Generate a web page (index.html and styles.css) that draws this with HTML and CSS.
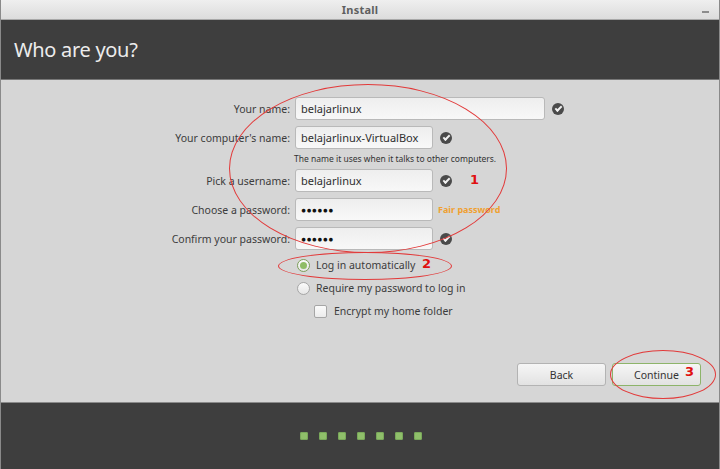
FILE: index.html
```html
<!DOCTYPE html>
<html lang="en">
<head>
    <meta charset="UTF-8">
    <title>Install</title>
    <link rel="stylesheet" href="styles.css">
</head>
<body>
    <div class="window">
        <div class="titlebar">
            <span class="title">Install</span>
            <span class="minimize"></span>
        </div>
        <div class="header">
            <h1>Who are you?</h1>
        </div>

        <div class="content">
            <div class="form">
                <label>Your name:</label>
                <div class="field">
                    <div class="input wide">belajarlinux</div>
                    <span class="check"></span>
                </div>

                <label>Your computer's name:</label>
                <div class="field">
                    <div class="input">belajarlinux-VirtualBox</div>
                    <span class="check"></span>
                </div>

                <span></span>
                <div class="hint">The name it uses when it talks to other computers.</div>

                <label>Pick a username:</label>
                <div class="field">
                    <div class="input">belajarlinux</div>
                    <span class="check"></span>
                </div>

                <label>Choose a password:</label>
                <div class="field">
                    <div class="input dots">&#9679;&#9679;&#9679;&#9679;&#9679;&#9679;</div>
                    <span class="strength">Fair password</span>
                </div>

                <label>Confirm your password:</label>
                <div class="field">
                    <div class="input dots">&#9679;&#9679;&#9679;&#9679;&#9679;&#9679;</div>
                    <span class="check"></span>
                </div>
            </div>

            <div class="options">
                <div class="option"><span class="radio checked"></span>Log in automatically</div>
                <div class="option"><span class="radio"></span>Require my password to log in</div>
                <div class="option sub"><span class="checkbox"></span>Encrypt my home folder</div>
            </div>

            <div class="buttons">
                <button>Back</button>
                <button class="primary">Continue</button>
            </div>
        </div>

        <div class="footer">
            <div class="steps">
                <span></span><span></span><span></span><span></span><span></span><span></span><span></span>
            </div>
        </div>

        <!-- red annotations drawn on top of the screenshot -->
        <div class="mark ring1"></div>
        <div class="mark ring2"></div>
        <div class="mark ring3"></div>
        <span class="num num1">1</span>
        <span class="num num2">2</span>
        <span class="num num3">3</span>
    </div>
</body>
</html>
```

FILE: styles.css
```css
body {
    margin: 0;
    font-family: 'Noto Sans', sans-serif;
    background-color: #d6d6d6;
}

.window {
    position: relative;
    width: 720px;
    height: 469px;
    box-sizing: border-box;
    display: flex;
    flex-direction: column;
    border-left: 1px solid #8a8a8a;
    border-right: 1px solid #8a8a8a;
    overflow: hidden;
}

.titlebar {
    height: 20px;
    flex-shrink: 0;
    display: flex;
    align-items: center;
    justify-content: center;
    position: relative;
    background: linear-gradient(#efefef, #dcdcdc);
    border-bottom: 1px solid #a8a8a8;
    box-sizing: border-box;
}

.title {
    font-size: 11px;
    font-weight: bold;
    color: #5f5f5f;
    letter-spacing: 0.2px;
}

.minimize {
    position: absolute;
    right: 10px;
    top: 11px;
    width: 7px;
    height: 2px;
    background-color: #8c8c8c;
}

.header {
    height: 59px;
    flex-shrink: 0;
    background-color: #3e3e3e;
    display: flex;
    align-items: center;
    padding-left: 13px;
    border-bottom: 1px solid #777;
}

.header h1 {
    margin: 0;
    font-size: 20px;
    font-weight: normal;
    color: #ececec;
    letter-spacing: -0.3px;
}

.content {
    flex: 1;
    display: flex;
    flex-direction: column;
    background-color: #d6d6d6;
    padding-top: 17px;
}

.form {
    display: grid;
    grid-template-columns: 289px 1fr;
    column-gap: 5px;
    row-gap: 6px;
    align-items: center;
}

.form label {
    text-align: right;
    font-size: 10.5px;
    color: #3c3c3c;
}

.field {
    display: flex;
    align-items: center;
    gap: 6px;
}

.input {
    width: 138px;
    height: 23px;
    box-sizing: border-box;
    padding: 0 5px;
    display: flex;
    align-items: center;
    font-size: 11px;
    color: #2e2e2e;
    background: linear-gradient(#eeeeee, #f8f8f8);
    border: 1px solid #b9b9b9;
    border-radius: 3px;
}

.input.wide {
    width: 250px;
}

.input.dots {
    font-size: 8.5px;
    letter-spacing: 0.3px;
    color: #111;
}

.check {
    width: 12px;
    height: 12px;
    border-radius: 50%;
    background-color: #4a4a4a;
    position: relative;
    margin-left: 1px;
}

.check::after {
    content: "";
    position: absolute;
    left: 3px;
    top: 3px;
    width: 5px;
    height: 2px;
    border-left: 2px solid #f2f2f2;
    border-bottom: 2px solid #f2f2f2;
    transform: rotate(-45deg);
}

.hint {
    font-size: 8.5px;
    line-height: 10px;
    color: #333;
    margin: -1px 0 -1px -1px;
}

.strength {
    font-size: 9px;
    font-weight: bold;
    color: #f0a030;
    margin-left: -1px;
}

.options {
    display: flex;
    flex-direction: column;
    gap: 9px;
    padding-left: 296px;
    margin-top: 8px;
}

.option {
    display: flex;
    align-items: center;
    gap: 6px;
    font-size: 10.5px;
    color: #3c3c3c;
    height: 14px;
}

.option.sub {
    padding-left: 17px;
    gap: 7px;
}

.radio {
    width: 11px;
    height: 11px;
    border-radius: 50%;
    border: 1px solid #a6a6a6;
    background: linear-gradient(#fbfbfb, #e6e6e6);
    position: relative;
}

.radio.checked {
    border-color: #7c9f5a;
}

.radio.checked::after {
    content: "";
    position: absolute;
    left: 2px;
    top: 2px;
    width: 7px;
    height: 7px;
    border-radius: 50%;
    background-color: #8fbd66;
}

.checkbox {
    width: 11px;
    height: 11px;
    border: 1px solid #a6a6a6;
    border-radius: 2px;
    background: linear-gradient(#fbfbfb, #ececec);
}

.buttons {
    display: flex;
    justify-content: flex-end;
    gap: 6px;
    margin-top: auto;
    margin-bottom: 16px;
    padding-right: 18px;
}

.buttons button {
    width: 89px;
    height: 23px;
    font-family: 'Noto Sans', sans-serif;
    font-size: 10.5px;
    color: #333;
    background: linear-gradient(#f6f6f6, #e2e2e2);
    border: 1px solid #b3b3b3;
    border-radius: 3px;
}

.buttons button.primary {
    border-color: #8db46a;
}

.footer {
    height: 66px;
    flex-shrink: 0;
    background-color: #3e3e3e;
    border-top: 1px solid #8a8a8a;
    display: flex;
    justify-content: center;
}

.steps {
    display: flex;
    gap: 11px;
    margin-top: 29px;
    margin-left: 2px;
}

.steps span {
    width: 8px;
    height: 8px;
    border-radius: 2px;
    background-color: #8fbf6a;
    box-shadow: inset 0 0 0 1px #79a85a;
}

/* annotations */
.mark {
    position: absolute;
    border: 1px solid #e23a3a;
    border-radius: 50%;
    pointer-events: none;
}

.ring1 {
    left: 228px;
    top: 84px;
    width: 276px;
    height: 167px;
}

.ring2 {
    left: 277px;
    top: 252px;
    width: 172px;
    height: 26px;
}

.ring3 {
    left: 609px;
    top: 350px;
    width: 104px;
    height: 47px;
}

.num {
    position: absolute;
    font-family: 'DejaVu Sans', sans-serif;
    font-weight: bold;
    font-size: 13px;
    color: #e01010;
}

.num1 {
    left: 469px;
    top: 172px;
}

.num2 {
    left: 421px;
    top: 256px;
}

.num3 {
    left: 684px;
    top: 364px;
}
```
